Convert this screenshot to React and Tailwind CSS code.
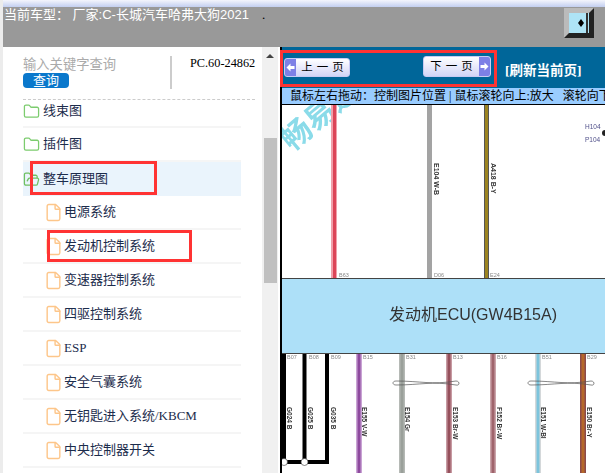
import { File, Folder, FolderOpen } from 'lucide-react';

const cjk = "font-['Liberation_Serif','Noto_Sans_CJK_SC',serif]";

const files = ['电源系统', '发动机控制系统', '变速器控制系统', '四驱控制系统', 'ESP', '安全气囊系统', '无钥匙进入系统/KBCM', '中央控制器开关'];

// wires under the ECU: x, core colour, edge colour, code label, pin label
const lowerWires = [
  { x: 359, color: '#8e4a9e', edge: '#c9a3d4', label: 'E155 V-W', pin: 'B15', lx: 365 },
  { x: 402, color: '#9aa09a', edge: '#b5b9b5', label: 'E154 Gr', pin: 'B31', lx: 408 },
  { x: 449, color: '#96505c', edge: '#c79aa2', label: 'E153 Br-W', pin: 'B13', lx: 456 },
  { x: 493, color: '#a0646c', edge: '#cba4aa', label: 'F152 Br-W', pin: 'B16', lx: 500 },
  { x: 538, color: '#7cc4dc', edge: '#d4d8da', label: 'E151 W-Bl', pin: 'B51', lx: 544 },
  { x: 583, color: '#b5682a', edge: '#8c4a4a', label: 'E150 Br-Y', pin: 'B29', lx: 590 },
];

const blackWires = [
  { label: 'G024 B', pin: 'B07', lx: 290, px: 287 },
  { label: 'G025 B', pin: 'B08', lx: 311, px: 309 },
  { label: 'G035 B', pin: 'B09', lx: 334, px: 331 },
];

function PageButton({ label, side, className }) {
  const cap = (
    <span className="flex w-[11px] self-stretch items-center justify-center bg-[#7d80e6]">
      <svg width="9" height="9" viewBox="0 0 9 9">
        {side === 'left'
          ? <path d="M0.5 4.5 L4.5 0.5 V3 H8.5 V6 H4.5 V8.5 Z" fill="#fff" />
          : <path d="M8.5 4.5 L4.5 0.5 V3 H0.5 V6 H4.5 V8.5 Z" fill="#fff" />}
      </svg>
    </span>
  );
  return (
    <button className={`flex items-center overflow-hidden rounded-[3px] border border-[#c9cbf3] bg-gradient-to-b from-white to-[#d3d5f6] ${className}`}>
      {side === 'left' && cap}
      <span className="flex-1 pl-[4px] text-center text-[11.500px] leading-none tracking-[4px] text-black">{label}</span>
      {side === 'right' && cap}
    </button>
  );
}

function Diagram() {
  return (
    <svg viewBox="282 105 323 368" className="block h-[368px] w-[323px] blur-[0.5px]" fontFamily="'Liberation Sans', sans-serif">
      <text transform="translate(292 152) rotate(-40)" fontSize="30" fontWeight="700" fill="#8adbe9" fontFamily="'Noto Sans CJK SC', sans-serif">畅易通</text>

      <rect x="331" y="105" width="6" height="174" fill="#f0a0aa" />
      <rect x="333" y="105" width="3" height="174" fill="#dc4558" />
      <rect x="427" y="105" width="5" height="174" fill="#a3a3a3" />
      <rect x="484" y="105" width="5" height="174" fill="#555" />
      <rect x="485" y="105" width="3" height="174" fill="#9c8420" />

      <text transform="translate(434 163) rotate(90)" fontSize="7" fontWeight="700" fill="#333">E104 W-B</text>
      <text transform="translate(491 163) rotate(90)" fontSize="7" fontWeight="700" fill="#333">A418 B-Y</text>
      <text x="339" y="277" fontSize="5.5" fill="#888">B63</text>
      <text x="434" y="277" fontSize="5.5" fill="#888">D06</text>
      <text x="490" y="277" fontSize="5.5" fill="#888">E24</text>
      <text x="585" y="129" fontSize="6.5" fill="#50508a">H104</text>
      <text x="585" y="142" fontSize="6.5" fill="#50508a">P104</text>
      <circle cx="605" cy="133" r="3" fill="#222" />

      <rect x="282" y="279" width="323" height="74" fill="#ade0f8" />
      <rect x="282" y="278" width="323" height="1" fill="#444" />
      <rect x="282" y="353" width="323" height="1" fill="#444" />
      <text x="473" y="320" textAnchor="middle" fontSize="16" fill="#333" fontFamily="'Liberation Sans', 'Noto Sans CJK SC', sans-serif">发动机ECU(GW4B15A)</text>

      <path d="M284 354 V462 H327 V354" fill="none" stroke="#000" strokeWidth="4" />
      <path d="M304.500 354 V462" fill="none" stroke="#000" strokeWidth="4" />
      <circle cx="284" cy="462" r="3.500" fill="#fff" stroke="#333" strokeWidth="0.600" />
      <circle cx="304.500" cy="462" r="3.500" fill="#fff" stroke="#333" strokeWidth="0.600" />
      {blackWires.map((w) => (
        <g key={w.label}>
          <text transform={`translate(${w.lx - 3} 407) rotate(90)`} fontSize="6.500" fontWeight="700" fill="#333">{w.label}</text>
          <text x={w.px} y="359" fontSize="5.500" fill="#888">{w.pin}</text>
        </g>
      ))}

      {lowerWires.map((w) => (
        <g key={w.label}>
          <rect x={w.x - 3} y="354" width="6" height="119" fill={w.edge} />
          <rect x={w.x - 1.5} y="354" width="3" height="119" fill={w.color} />
          <text transform={`translate(${w.lx - 3} 407) rotate(90)`} fontSize="6.500" fontWeight="700" fill="#333">{w.label}</text>
          <text x={w.x + 4} y="359" fontSize="5.500" fill="#888">{w.pin}</text>
        </g>
      ))}

      <path d="M396 381 C420 381 432 385 456 381 C460 381 460 386 456 385 C432 381 420 385 396 385 C392 385 392 381 396 381 Z" fill="none" stroke="#555" strokeWidth="0.700" />
      <path d="M531 381 C555 381 567 385 591 381 C595 381 595 386 591 385 C567 381 555 385 531 385 C527 385 527 381 531 381 Z" fill="none" stroke="#555" strokeWidth="0.700" />
    </svg>
  );
}

export default function App() {
  return (
    <div className={`relative flex h-[473px] w-[605px] overflow-hidden bg-[#f4f4f4] ${cjk}`}>
      <div className="w-[3px] shrink-0 bg-[#ececec]" />

      <div className="flex min-w-0 flex-1 flex-col">
        <div className="h-[7px] shrink-0 bg-gradient-to-b from-[#f4f5fc] to-[#c3cff0]" />

        {/* header bar */}
        <div className="flex h-[40px] shrink-0 items-start justify-between bg-[#999999] pr-[11px]">
          <div className="flex items-center pl-[1px] text-[13px] leading-[16px] whitespace-pre text-white">
            <span className="font-['Liberation_Sans','Noto_Sans_CJK_SC',sans-serif]">当前车型： 厂家:C-长城汽车哈弗大狗2021</span>
            <span className="ml-[13px] text-black">.</span>
          </div>
          <button className="mt-[1px] flex h-[30px] w-[30px] items-center justify-center border-[5px] border-t-[#bbbbbb] border-r-[#222222] border-b-[#222222] border-l-[#bbbbbb] bg-[#777777]">
            <span className="flex h-[20px] w-[20px] items-center justify-end gap-[2px] bg-[#aee4f6] pr-[1px]">
              <span className="h-[8px] w-[6px] bg-black [clip-path:polygon(50%_0,100%_50%,50%_100%,0_50%)]" />
              <span className="h-full w-[2px] bg-[#333333]" />
            </span>
          </button>
        </div>

        <div className="flex min-h-0 flex-1">
          {/* sidebar */}
          <aside className="flex w-[259px] shrink-0 flex-col bg-white pt-[9px] pl-[20px]">
            <div className="flex h-[33px] shrink-0">
              <div className="w-[149px] border-r-2 border-[#cccccc]">
                <div className="text-[13.300px] leading-[17px] text-[#aaaaaa]">输入关键字查询</div>
                <button className="block h-[15px] w-[46px] rounded-[4px] bg-[#0a78cc] text-center text-[13px] leading-[15px] text-white">查询</button>
              </div>
              <div className="pl-[18px] text-[12.300px] leading-[14px] text-black">PC.60-24862</div>
            </div>
            <div className="mt-[10px] w-[232px] border-t border-dashed border-[#cccccc]" />

            <div className="w-[218px]">
              <div className="flex h-[28px] items-start gap-[3px] border-b-2 border-[#f5f5f5] pt-[3px] text-[13px] leading-[16px] text-[#1c2c4c]">
                <Folder size={17} strokeWidth={1.800} className="text-[#7ccc6e]" />线束图
              </div>
              <div className="flex h-[34px] items-center gap-[3px] border-b-2 border-[#f5f5f5] text-[13px] text-[#1c2c4c]">
                <Folder size={17} strokeWidth={1.800} className="text-[#7ccc6e]" />插件图
              </div>
              <div className="flex h-[34px] items-center gap-[3px] bg-[#eaf4fc] text-[13px] text-[#1c2c4c]">
                <FolderOpen size={17} strokeWidth={1.800} className="text-[#6fc060]" />整车原理图
              </div>
              {files.map((name) => (
                <div key={name} className="flex h-[34px] items-center gap-[1px] border-b-2 border-[#f5f5f5] pl-[21px] text-[13px] text-[#1c2c4c]">
                  <File size={19} strokeWidth={1.800} className="text-[#fdc68a]" />{name}
                </div>
              ))}
            </div>
          </aside>

          {/* scrollbar */}
          <div className="flex w-[16px] shrink-0 flex-col items-center bg-[#f0f0f0]">
            <div className="mt-[7px] h-0 w-0 border-x-[4px] border-b-[4px] border-x-transparent border-b-[#444444]" />
            <div className="mt-[80px] h-[145px] w-[13px] bg-[#c0c0c0]" />
          </div>
          <div className="w-[2px] shrink-0 bg-white" />

          {/* page viewer */}
          <main className="flex min-w-0 flex-1 flex-col border-l-[2px] border-black bg-white">
            <div className="flex h-[41px] shrink-0 bg-[#006699]">
              <PageButton label="上一页" side="left" className="mt-[11px] ml-[2px] h-[19px] w-[66px]" />
              <PageButton label="下一页" side="right" className="mt-[9px] ml-[73px] h-[21px] w-[68px]" />
              <span className="mt-[16px] ml-[14px] text-[13.500px] leading-[16px] font-bold whitespace-nowrap text-white">[刷新当前页]</span>
            </div>
            <div className="h-[17px] shrink-0 overflow-hidden border-b border-black bg-[#99ccff] pl-[8px] text-[12px] leading-[16px] whitespace-pre text-black">
              鼠标左右拖动：控制图片位置 | 鼠标滚轮向上:放大   滚轮向下
            </div>
            <Diagram />
          </main>
        </div>
      </div>

      {/* red annotation boxes */}
      <div className="absolute top-[161px] left-[30px] h-[34px] w-[127px] border-[3px] border-[#ff3333]" />
      <div className="absolute top-[230px] left-[47px] h-[32px] w-[145px] border-[3px] border-[#ff3333]" />
      <div className="absolute top-[50px] left-[280px] h-[37px] w-[217px] border-[3px] border-[#ff3333]" />
    </div>
  );
}
